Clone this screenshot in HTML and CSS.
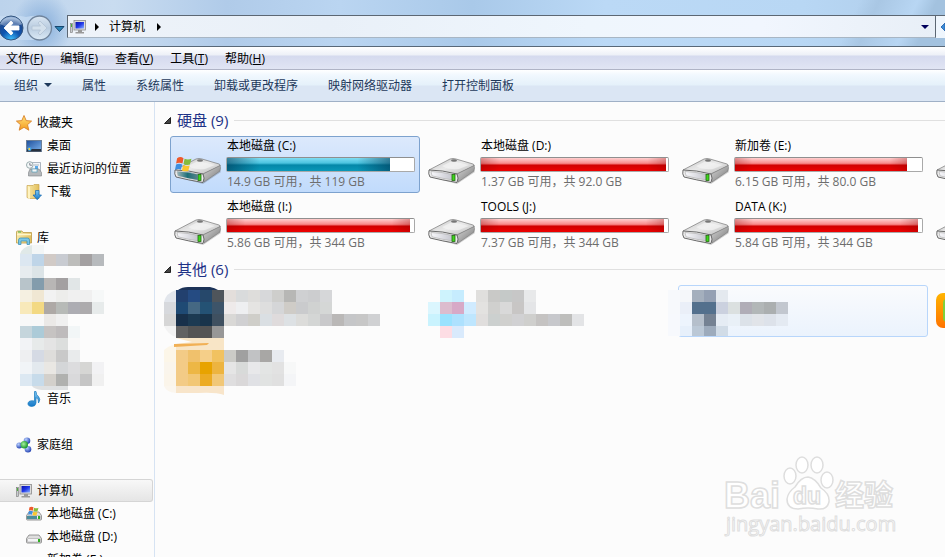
FILE: index.html
```html
<!DOCTYPE html>
<html lang="zh-CN">
<head>
<meta charset="utf-8">
<title>计算机</title>
<link rel="stylesheet" href="styles.css">
</head>
<body>
<svg class="defs" aria-hidden="true">
  <defs>
    <linearGradient id="top" x1="0" y1="0" x2="1" y2="1"><stop offset="0" stop-color="#c4c4c4"/><stop offset=".5" stop-color="#e9e9e9"/><stop offset="1" stop-color="#b9b9b9"/></linearGradient>
    <linearGradient id="side" x1="0" y1="0" x2="1" y2="1"><stop offset="0" stop-color="#d8d8d8"/><stop offset="1" stop-color="#777"/></linearGradient>
    <linearGradient id="front" x1="0" y1="0" x2="1" y2="0"><stop offset="0" stop-color="#f8f8fb"/><stop offset="1" stop-color="#c3c4cc"/></linearGradient>
    <linearGradient id="frontTeal" x1="0" y1="0" x2="1" y2="0"><stop offset="0" stop-color="#9db4b8"/><stop offset=".5" stop-color="#1e6f78"/><stop offset="1" stop-color="#5b858b"/></linearGradient>
    <linearGradient id="screen" x1="0" y1="0" x2="1" y2="1"><stop offset="0" stop-color="#0a10a8"/><stop offset=".5" stop-color="#2038e8"/><stop offset="1" stop-color="#8cb4ff"/></linearGradient>
    <linearGradient id="desk" x1="0" y1="0" x2="1" y2="1"><stop offset="0" stop-color="#1d4f9c"/><stop offset="1" stop-color="#7fb4ee"/></linearGradient>
    <linearGradient id="star" x1="0" y1="0" x2="0" y2="1"><stop offset="0" stop-color="#ffe27a"/><stop offset="1" stop-color="#f59a1c"/></linearGradient>
    <linearGradient id="folder" x1="0" y1="0" x2="1" y2="0"><stop offset="0" stop-color="#f9e9a8"/><stop offset="1" stop-color="#e2bf5c"/></linearGradient>
    <linearGradient id="blue" x1="0" y1="0" x2="0" y2="1"><stop offset="0" stop-color="#7cc6f2"/><stop offset="1" stop-color="#1478c8"/></linearGradient>
    <radialGradient id="back" cx=".5" cy="1" r=".9"><stop offset="0" stop-color="#3fc4ff"/><stop offset=".45" stop-color="#0f55b0"/><stop offset=".8" stop-color="#1c4a92"/><stop offset="1" stop-color="#7da0cc"/></radialGradient>
    <linearGradient id="fwd" x1="0" y1="0" x2="0" y2="1"><stop offset="0" stop-color="#dbe7f3"/><stop offset=".5" stop-color="#b9cce0"/><stop offset="1" stop-color="#dceaf6"/></linearGradient>
    <linearGradient id="orange" x1="0" y1="0" x2="0" y2="1"><stop offset="0" stop-color="#ffb400"/><stop offset="1" stop-color="#ff7300"/></linearGradient>
    <radialGradient id="ballB" cx=".35" cy=".3" r=".7"><stop offset="0" stop-color="#b8d0ff"/><stop offset="1" stop-color="#2846b4"/></radialGradient>
    <radialGradient id="ballG" cx=".4" cy=".4" r=".6"><stop offset="0" stop-color="#a8f0a0"/><stop offset="1" stop-color="#189828"/></radialGradient>
  </defs>
  <symbol id="flag" viewBox="0 0 16 15">
    <path d="M2 2Q5 0 8 2L7 7Q4 5.500 1 7Z" fill="#ee5a2c"/>
    <path d="M9 2.500Q12 4 15.500 2.500L14 8Q11 9 8 7.500Z" fill="#85bc3c"/>
    <path d="M1 8Q4 6.500 6.800 8L5.500 13Q3 11.500 0 13Z" fill="#3e8fe0"/>
    <path d="M7.800 8.500Q11 10 13.800 9L12.500 14Q9.500 15 6.500 13.500Z" fill="#fbc62c"/>
  </symbol>
  <symbol id="drive" viewBox="0 0 48 28">
    <path d="M3 20L29 27L47 15L45 12Z" fill="#000" opacity=".18"/>
    <path d="M1 13L22 2Q25 1 28 2L45 7Q47 8 46 9L29 17L3 14Z" fill="url(#top)" stroke="#777" stroke-width=".7"/>
    <path d="M14 9L24 4L41 8L31 12Q21 13 14 9Z" fill="#f4f4f4" opacity=".7"/>
    <ellipse cx="26" cy="3.500" rx="3" ry="1.200" fill="#777"/>
    <path d="M29 17L46 8.500Q47 10 46 14L30 25Z" fill="url(#side)" stroke="#777" stroke-width=".6"/>
    <path d="M1 13Q14 13 29 17Q31 21 29 25.500Q14 23 2 20Q0 17 1 13Z" fill="#ececec" stroke="#5c5c5c" stroke-width=".9"/>
    <path d="M3 14.500Q14 15 25 17.500V23Q14 21.500 4 18.800Z" fill="url(#front)" stroke="#aaa" stroke-width=".6"/>
    <rect x="24" y="17.500" width="3" height="6" fill="#3fd51c" stroke="#226a12" stroke-width=".8"/>
  </symbol>
  <symbol id="drive-win" viewBox="0 0 48 28">
    <use href="#drive" width="48" height="28"/>
    <path d="M3 14.500Q14 15 24 17.500V23Q14 21.500 4 18.800Z" fill="url(#frontTeal)"/>
    <use href="#flag" x="1" y="-1" width="17" height="16"/>
  </symbol>
  <symbol id="pc" viewBox="0 0 16 16">
    <rect x=".5" y="4.500" width="2" height="9" fill="#c8ccd0" stroke="#777" stroke-width=".6"/>
    <rect x="1" y="5" width="1" height="3" fill="#4cae3c"/>
    <rect x="4" y="1.500" width="11.500" height="9.500" fill="#dcdcdc" stroke="#8b8b8b" stroke-width=".8"/>
    <rect x="5.500" y="3" width="8.500" height="6.500" fill="url(#screen)"/>
    <path d="M8 11H12V13H14V14.500H5.500V13H8Z" fill="#999"/>
  </symbol>
  <symbol id="mini-drive" viewBox="0 0 16 16">
    <path d="M3 6H13L15.500 9.500V13Q15.500 14 14.500 14H1.500Q.5 14 .5 13V9.500Z" fill="#dedede" stroke="#808080" stroke-width=".8"/>
    <rect x="1.500" y="9.500" width="13" height="3.500" rx="1" fill="#f4f4f6" stroke="#999" stroke-width=".5"/>
    <rect x="12" y="10" width="2" height="3" fill="#2fae22"/>
  </symbol>
</svg>

<header class="glass">
  <svg class="nav-buttons" width="66" height="30" viewBox="0 0 66 30" role="img" aria-label="后退 前进">
    <path d="M0 3Q20 2 26 4Q34 2 42 3Q52 6 52 15Q50 26 38 27H0Z" fill="#c7dcf2" opacity=".8"/>
    <circle cx="11" cy="15" r="12" fill="url(#back)" stroke="#34557f"/>
    <path d="M0 11Q3 4 11 4Q19 4 22 11Q16 15 11 14Q5 14 0 11Z" fill="#fff" opacity=".3"/>
    <path d="M4 15L11 8L13 10L10.500 13H19V17H10.500L13 20L11 22Z" fill="#fff" stroke="#fff" stroke-width=".8"/>
    <circle cx="39.500" cy="15" r="12" fill="url(#fwd)" stroke="#70849c" stroke-width="1.300"/>
    <path d="M47 15L40 8L38 10L40.500 13H32V17H40.500L38 20L40 22Z" fill="#d3e0ec" stroke="#b3c3d4" stroke-width=".8"/>
    <path d="M55 13.500H64L59.500 18.500Z" fill="#2b83b5" stroke="#17466e"/>
  </svg>
  <nav class="address" aria-label="地址">
    <svg width="16" height="16"><use href="#pc"/></svg>
    <i class="chev"></i>
    <button type="button" class="crumb">计算机</button>
    <i class="chev"></i>
    <button type="button" class="drop" aria-label="上一个位置"><i class="down navy"></i></button>
  </nav>
  <button type="button" class="refresh" aria-label="刷新"><svg width="9" height="16" viewBox="0 0 9 16"><path d="M5 8L9 4V12Z" fill="#3c8bd6" stroke="#1d5da8" stroke-width=".8"/></svg></button>
</header>

<nav class="menubar">
  <button type="button">文件(<u>F</u>)</button>
  <button type="button">编辑(<u>E</u>)</button>
  <button type="button">查看(<u>V</u>)</button>
  <button type="button">工具(<u>T</u>)</button>
  <button type="button">帮助(<u>H</u>)</button>
</nav>
<div class="toolbar">
  <button type="button">组织<i class="down"></i></button>
  <button type="button">属性</button>
  <button type="button">系统属性</button>
  <button type="button">卸载或更改程序</button>
  <button type="button">映射网络驱动器</button>
  <button type="button">打开控制面板</button>
</div>

<div class="body">
  <aside class="sidebar">
    <a href="#" class="row"><svg viewBox="0 0 16 16"><path d="M8 .5L10.200 5.600L15.600 6.100L11.500 9.700L12.800 15.200L8 12.300L3.200 15.200L4.500 9.700L.4 6.100L5.800 5.600Z" fill="url(#star)" stroke="#d9822b" stroke-width=".9"/></svg>收藏夹</a>
    <a href="#" class="row child"><svg viewBox="0 0 16 16"><rect x=".5" y="2.500" width="15" height="11" fill="url(#desk)" stroke="#6c7f97"/><rect x="1" y="11" width="14" height="2.500" fill="#26303e"/><circle cx="3.500" cy="11" r="2" fill="#45a3e0"/><path d="M2.500 10H4V12H2.500Z" fill="#f7cf3c"/></svg>桌面</a>
    <a href="#" class="row child"><svg viewBox="0 0 16 16"><path d="M5 1.500H14.500V11H5Z" fill="#f2f5f8" stroke="#8d9aa6" stroke-width=".7"/><path d="M8 4H13" stroke="#a9b6c2"/><rect x="9" y="5" width="3" height="3" fill="#5aa9e8"/><path d="M2.500 11.500L4 8H13L15.500 11.500V15H2.500Z" fill="#b4b8bb" stroke="#7c8083" stroke-width=".6"/><rect x="6" y="8" width="5" height="3" fill="#f6f6f6" stroke="#459bb9" stroke-width=".6"/><circle cx="3.800" cy="4" r="3.300" fill="#f3f8f8" stroke="#9aabae"/><path d="M3.800 2V4.200H6" fill="none" stroke="#667" stroke-width=".8"/></svg>最近访问的位置</a>
    <a href="#" class="row child"><svg viewBox="0 0 16 16"><path d="M1 1.500H7L8 .5H13V14.500H4L1 13.500Z" fill="url(#folder)" stroke="#c8a550" stroke-width=".7"/><path d="M2 2L4 3V15L2 14Z" fill="#fff3c0"/><path d="M9.500 6.500H13V11H15.500L11.200 15.700L7 11H9.500Z" fill="url(#blue)" stroke="#1467b0" stroke-width=".7"/></svg>下载</a>

    <a href="#" class="row gap"><svg viewBox="0 0 16 16"><path d="M.5 2Q.5 1 1.500 1H6L7 2.500H15.500V13H.5Z" fill="url(#folder)" stroke="#bd9c48" stroke-width=".8"/><path d="M2 2H5" stroke="#46b34a"/><path d="M1 4.500H15" stroke="#fff6cc" stroke-width="1.500"/><path d="M2.500 14.500V10Q2.500 8 4.500 8H11.500Q13.500 8 13.500 10V14.500H11V11H5V14.500Z" fill="#7cc7e6" stroke="#318bb4" stroke-width=".7"/></svg>库</a>
    <svg class="mosaic side" data-mosaic="library"><path d="M0 5Q2 -2 12 -4V5Z" fill="#e0e9e8"/><path d="M12 -4H24V5H12Z" fill="#f3f6f6"/><path d="M12 137H48V141H22Q14 140 12 137Z" fill="#dfe1e2"/></svg>
    <a href="#" class="row child"><svg viewBox="0 0 16 16"><path d="M8.500 .5H10Q10 4 12.500 5.500Q15 8.500 12.500 12Q13 8 10 6.500V12Q9.500 15.500 5.500 15.500Q1.500 15 2 12Q3 9 8.500 10Z" fill="url(#blue)" stroke="#1678bd" stroke-width=".7"/></svg>音乐</a>

    <a href="#" class="row gap"><svg viewBox="0 0 16 16"><circle cx="11" cy="3.800" r="3.300" fill="url(#ballB)"/><circle cx="3.300" cy="8.500" r="3" fill="url(#ballB)"/><circle cx="12" cy="12.300" r="3.300" fill="url(#ballB)"/><circle cx="8.300" cy="7.800" r="3.700" fill="url(#ballG)"/></svg>家庭组</a>

    <a href="#" class="row gap selected"><svg><use href="#pc"/></svg>计算机</a>
    <a href="#" class="row child"><svg viewBox="0 0 16 16"><use href="#mini-drive"/><rect x="1" y="10" width="10" height="3" fill="#4a8d9a"/><use href="#flag" x="2" y="0" width="11" height="10"/></svg>本地磁盘 (C:)</a>
    <a href="#" class="row child"><svg><use href="#mini-drive"/></svg>本地磁盘 (D:)</a>
    <a href="#" class="row child"><svg><use href="#mini-drive"/></svg>新加卷 (E:)</a>
  </aside>

  <main class="content">
    <h2 class="group"><svg width="7" height="7"><path d="M6.500 .5V6.500H.5Z" fill="#444" stroke="#222"/></svg>硬盘 (9)</h2>
    <div class="tiles">
      <div class="tile active"><svg class="icon"><use href="#drive-win"/></svg><div class="info"><b>本地磁盘 (C:)</b><div class="bar teal"><i style="width:87%"></i></div><span>14.9 GB 可用，共 119 GB</span></div></div>
      <div class="tile"><svg class="icon"><use href="#drive"/></svg><div class="info"><b>本地磁盘 (D:)</b><div class="bar"><i style="width:99%"></i></div><span>1.37 GB 可用，共 92.0 GB</span></div></div>
      <div class="tile"><svg class="icon"><use href="#drive"/></svg><div class="info"><b>新加卷 (E:)</b><div class="bar"><i style="width:92%"></i></div><span>6.15 GB 可用，共 80.0 GB</span></div></div>
      <div class="tile"><svg class="icon"><use href="#drive"/></svg></div>
      <div class="tile"><svg class="icon"><use href="#drive"/></svg><div class="info"><b>本地磁盘 (I:)</b><div class="bar"><i style="width:98%"></i></div><span>5.86 GB 可用，共 344 GB</span></div></div>
      <div class="tile"><svg class="icon"><use href="#drive"/></svg><div class="info"><b>TOOLS (J:)</b><div class="bar"><i style="width:98%"></i></div><span>7.37 GB 可用，共 344 GB</span></div></div>
      <div class="tile"><svg class="icon"><use href="#drive"/></svg><div class="info"><b>DATA (K:)</b><div class="bar"><i style="width:98%"></i></div><span>5.84 GB 可用，共 344 GB</span></div></div>
      <div class="tile"><svg class="icon"><use href="#drive"/></svg></div>
    </div>

    <h2 class="group"><svg width="7" height="7"><path d="M6.500 .5V6.500H.5Z" fill="#444" stroke="#222"/></svg>其他 (6)</h2>
    <div class="tiles others">
      <div class="tile"><svg class="mosaic" data-mosaic="app"><path d="M-6 17Q-4 8 6 5V17Z" fill="#e2e6ec"/><path d="M-6 41H6V52Q-2 50 -6 41Z" fill="#f3f3f3"/><path d="M8 5Q12 2 18 2H40Q45 3 48 5Z" fill="#1c3358"/></svg></div>
      <div class="tile"><svg class="mosaic" data-mosaic="cloud"></svg></div>
      <div class="tile hover"><svg class="mosaic" data-mosaic="phone"></svg></div>
      <div class="tile"><svg class="mosaic"><rect x="4" y="8" width="36" height="35" rx="7" fill="url(#orange)"/><rect x="11" y="14" width="20" height="23" rx="4" fill="#7ed13b"/></svg></div>
      <div class="tile"><svg class="mosaic" data-mosaic="folder"><path d="M-6 12Q-2 8 6 6V12Z" fill="#fcf6e9"/><path d="M6 0H54V12H6V6L22 4Z" fill="#f8e5c6"/><path d="M4 6L39 5L37 7L4 9Z" fill="#f1b055"/><path d="M6 48H54V57Q46 54 28 55H6Z" fill="#f8e5ca"/><path d="M-6 48H6V55Q-4 54 -6 48Z" fill="#fbf6ee"/></svg></div>
    </div>

    <svg class="watermark" width="176" height="84" viewBox="0 0 176 84" role="img" aria-label="Baidu 经验">
      <g fill="#fff" stroke="#dedede" stroke-width="1.500">
        <text x="0" y="52" class="wm-brand">Bai</text>
        <ellipse cx="66" cy="20" rx="6" ry="8"/><ellipse cx="78" cy="9" rx="6" ry="8"/><ellipse cx="93" cy="9" rx="6" ry="8"/><ellipse cx="103" cy="24" rx="6" ry="8"/>
        <path d="M84 21Q91 22 97 32Q106 38 105 46Q103 54 94 53Q84 51 74 53Q63 53 63 43Q64 36 71 31Q77 21 84 21Z"/>
        <text x="69" y="48" class="wm-du">du</text>
        <text x="111" y="50" class="wm-cn">经验</text>
        <text x="2" y="75" class="wm-url">jingyan.baidu.com</text>
      </g>
    </svg>
  </main>
</div>
<script src="script.js"></script>
</body>
</html>
```
FILE: styles.css
```css
* { box-sizing: border-box; }

html, body { height: 100%; }

body {
  margin: 0;
  display: flex;
  flex-direction: column;
  overflow: hidden;
  background: #fcfcfc;
  color: #000;
  font: 12px/16px "Open Sans", "Noto Sans CJK SC", sans-serif;
}

button {
  padding: 0;
  border: 0;
  background: none;
  color: inherit;
  font: inherit;
}

a { color: inherit; text-decoration: none; }

.defs { position: absolute; width: 0; height: 0; }

.glass {
  flex: none;
  display: flex;
  align-items: flex-end;
  height: 47px;
  padding-bottom: 8px;
  border-bottom: 1px solid #586878;
  background:
    radial-gradient(ellipse 30px 34px at 42px 26px, #86aedb 0%, transparent 100%),
    linear-gradient(115deg, transparent 89%, #a9c7e4 91%, #b8d6f3 95%, #a3c2df 97%),
    linear-gradient(90deg, #bcd3ec 0%, #c9dcf0 12%, #b0cbe9 24%, #bad5f1 36%, #a9c9e9 50%, #bbd9f6 64%, #b8d7f4 85%, #aecbe8 100%);
}

.nav-buttons { flex: none; margin-bottom: -5px; }

.address {
  flex: 1;
  display: flex;
  align-items: center;
  gap: 9px;
  height: 23px;
  margin-left: 1px;
  padding: 0 6px 0 2px;
  border: 1px solid #5c6773;
  border-bottom-color: #a8b6c4;
  background: linear-gradient(90deg, #eef3f9, #e9f0f8 30%, #eff6fd 60%, #f1f6fe 80%, #e8eff7);
}

.chev {
  border: 4px solid transparent;
  border-left-color: #000;
  border-right-width: 0;
}

.crumb { padding: 0 3px 0 1px; }
.drop { margin-left: auto; }

.down {
  display: inline-block;
  border: 4px solid transparent;
  border-top-color: #1e395b;
  border-bottom-width: 0;
}

.navy { border-top-color: #00005c; vertical-align: middle; }

.refresh {
  display: flex;
  align-items: center;
  width: 9px;
  height: 23px;
  border-top: 1px solid #5c6773;
  background: #eff6fd;
}

.menubar {
  flex: none;
  display: flex;
  align-items: center;
  gap: 17px;
  height: 23px;
  padding: 2px 6px 0;
  border-bottom: 1px solid #b0b4c6;
  background: linear-gradient(#fff 0, #edf0f7 8px, #d5daee 9px, #e1e5f4 100%);
}

.toolbar {
  flex: none;
  display: flex;
  align-items: center;
  gap: 30px;
  height: 32px;
  padding: 0 14px;
  border-bottom: 1px solid #9fb0c6;
  background: linear-gradient(#fff 0, #f1f8fe 5px, #e5f1fa 15px, #dbe6f4 16px, #dbe6f4 100%);
  color: #1e395b;
}

.toolbar .down { margin-left: 6px; vertical-align: 3px; }

.body { flex: 1; display: flex; min-height: 0; }

.sidebar {
  flex: none;
  width: 155px;
  padding: 9px 1px 0 0;
  overflow: hidden;
  border-right: 1px solid #d6e3f3;
}

.row {
  display: flex;
  align-items: center;
  gap: 5px;
  height: 23px;
  padding-left: 16px;
  white-space: nowrap;
}

.row svg { flex: none; width: 16px; height: 16px; }
.child { padding-left: 26px; }
.gap { margin-top: 23px; }

.selected {
  border: 1px solid #d5d5d5;
  border-left: 0;
  border-radius: 0 3px 3px 0;
  background: linear-gradient(#f8f8f8, #e5e5e5);
}

.mosaic { display: block; overflow: visible; width: 100%; height: 52px; }
.side { height: 138px; margin-left: 20px; }

.content {
  position: relative;
  flex: 1;
  min-width: 0;
  overflow: hidden;
  padding: 8px 0 0 15px;
}

.group {
  display: flex;
  align-items: center;
  gap: 6px;
  height: 20px;
  margin: 0 0 6px -6px;
  color: #1e3287;
  font-size: 15px;
  font-weight: 400;
}

.group::after {
  content: "";
  flex: 1;
  height: 1px;
  background: #e0e0e0;
}

.tiles {
  display: grid;
  grid-template-columns: repeat(4, 250px);
  gap: 4px;
  margin-bottom: 5px;
}

.tile {
  display: flex;
  gap: 4px;
  height: 57px;
  padding: 0 4px 0 3px;
  border: 1px solid transparent;
  border-radius: 3px;
}

.active {
  border-color: #7da2ce;
  background: linear-gradient(#dce9fc, #c1dbfc);
}

.icon { flex: none; width: 48px; height: 28px; margin-top: 20px; }
.info { flex: 1; line-height: 20px; }
.info b, .info span { display: block; height: 20px; padding-left: 1px; }
.info b { font-weight: 400; line-height: 18px; }
.info span { color: #6d6d6d; }

.bar {
  height: 15px;
  border: 1px solid #a9a9a9;
  border-top-color: #8f8f8f;
  border-radius: 2px;
  background: #fff;
}

.bar i {
  display: block;
  height: 100%;
  background:
    linear-gradient(90deg, rgba(140, 0, 0, .3), transparent 10%, transparent 90%, rgba(140, 0, 0, .3)),
    linear-gradient(#ffd0d0 0, #f98d8d 5px, #f26b6b 6px, #d00000 7px, #ee0000 100%);
}

.teal i {
  background:
    linear-gradient(90deg, rgba(0, 50, 80, .55), transparent 20%, transparent 80%, rgba(0, 50, 80, .55)),
    linear-gradient(#7fdcf2 0, #4cc4e0 5px, #2ba8c6 6px, #0487a8 7px, #0a98b8 100%);
}

.others { row-gap: 1px; }
.others .tile { height: 52px; padding: 0; }
.others .mosaic { margin: -1px; }

.hover {
  border-color: #b8d6fb;
  background: linear-gradient(#fafbfd, #ebf3fd);
}

.watermark { position: absolute; right: 45px; bottom: 17px; overflow: visible; }
.wm-brand { font: bold 36px "Liberation Sans", sans-serif; }
.wm-du { font: bold 23px "Liberation Sans", sans-serif; }
.wm-cn { font: bold 29px "Noto Sans CJK SC", sans-serif; }
.wm-url { font: 20px "Open Sans", sans-serif; stroke-width: 1px; }
```
FILE: script.js
```js
// Pixelated thumbnails: each row lists the colours of its 12px cells, "-" leaves a cell empty.
const mosaics = {
  library: { x: 0, y: 5, rows: [
    "dce7f1 bfd5e8 d1cac6 c8cbd1 bdbdbb a3a0a1 b7babd",
    "e7ecef dce4e7",
    "b8c4ca 839cac b8b6b5 a3a0a1 e1e6e7",
    "f5f0e1 f0e7d3 f2f2f2 ededeb f0f0f0 f0f0f0 f6f8f8",
    "f8e9ba f3d983 aea9a6 b7bab7 adadb3 adabad e7ebeb",
    "f8f8f8 f8f8f8 ebe9e7 f0f0f0",
    "c5d5dc accbd8 c6c3c2 bebbbc f2f6f7",
    "f2f3f6 e7eaea e4e4e4 dcdedd f9f9f9",
    "eeeff1 d5dae4 dedddb c9c9c9 e9ebec",
    "f1f4f7 e3e9ee e9e7e3 d4d6d8 dcdcde d6d6d4 f2f2f4",
    "dce8f2 c7dbea d3d0cb b0b1af d9d9db c5c5c5 f0f0f0"] },
  app: { x: -6, y: 5, rows: [
    "- 22406e 254b82 26486b 4f555b e3dedb d9dbdc dedddb d7d8da cececc b7b7b5 cfd0d2 cccdcf d6d7d9",
    "d7d9dd 1f4a74 456883 245274 3d5469 eeeaea eeeff1 e5e4e2 dedede d5d6d8 cfccc7 cacbcd d0d2d1 d5d7d6",
    "d6d6d6 18304a 1c3a52 19344b 3f5060 d9d8d6 d0d0d2 cfcec9 dadfe3 dfdbdc dde1e4 dcdcda d4d6d5 c9c9cb bab8b7 c5c6c8 c7c7c7 d0d1d3",
    "- 626262 545454 545454 979797"] },
  cloud: { x: 4, y: 5, rows: [
    "- cef3fd c6ecfe - e0dfdd c9c9c7 c5c9c8 c7c7c7 e8e9ea",
    "dbf6fe dcbcce d7a9c7 d0ebff e3e2e0 d0d0ce d9d9d9 c8c6c5 e4e5e7",
    "c9f3fe 9ae2fe ade1fe bee6fe e0dedd ccd0cf d0d0ce d1d1d3 cfcfcd c5c3c2 c7c8cc bebebc e3e4e6",
    "- fddde4 d9eafc"] },
  phone: { x: -10, y: 5, rows: [
    "f7f9fc f5f7fa a4afbd 94a0b3 e4e9ef",
    "f7f9fc eaeff8 53708d 53708d cbd1df dbe0e0 b0adb7 b2b7b8 abafb0 c2c7cf",
    "f7f9fd edf4fd b5bfcb 758293 e5ecf4 e9f0f7 dce2e9 e1e4e9 dde2ea e4eaf2",
    "f7f9fd e7f0fb bbc8d6 9dabbc d1dce7"], last: 10 },
  folder: { x: -6, y: 12, rows: [
    "fcf6e8 f3cb86 f0c16c f5cf89 f1c260 cbcbc7 a0a0a0 c1c2c4 a8a7a5 e8ebf0",
    "faf5ec f3cb86 edb745 e8a300 edb440 e5e5e5 d8dad9 e8e8ea e3e5e4 e2e2e2 f7f8f8",
    "fbf5ea f3cb86 f2c775 ecab23 f1c777 dfdedf dad8d9 e0e1e5 e1e3e2 e0e0e0 f4f5f7"] }
};

const SIZE = 12;
document.querySelectorAll("[data-mosaic]").forEach(svg => {
  const { x, y, rows, last } = mosaics[svg.dataset.mosaic];
  rows.forEach((row, r) => row.split(" ").forEach((colour, c) => {
    if (colour === "-") return;
    const cell = document.createElementNS("http://www.w3.org/2000/svg", "rect");
    cell.setAttribute("x", x + c * SIZE);
    cell.setAttribute("y", y + r * SIZE);
    cell.setAttribute("width", SIZE);
    cell.setAttribute("height", last && r === rows.length - 1 ? last : SIZE);
    cell.setAttribute("fill", "#" + colour);
    svg.append(cell);
  }));
});
```
